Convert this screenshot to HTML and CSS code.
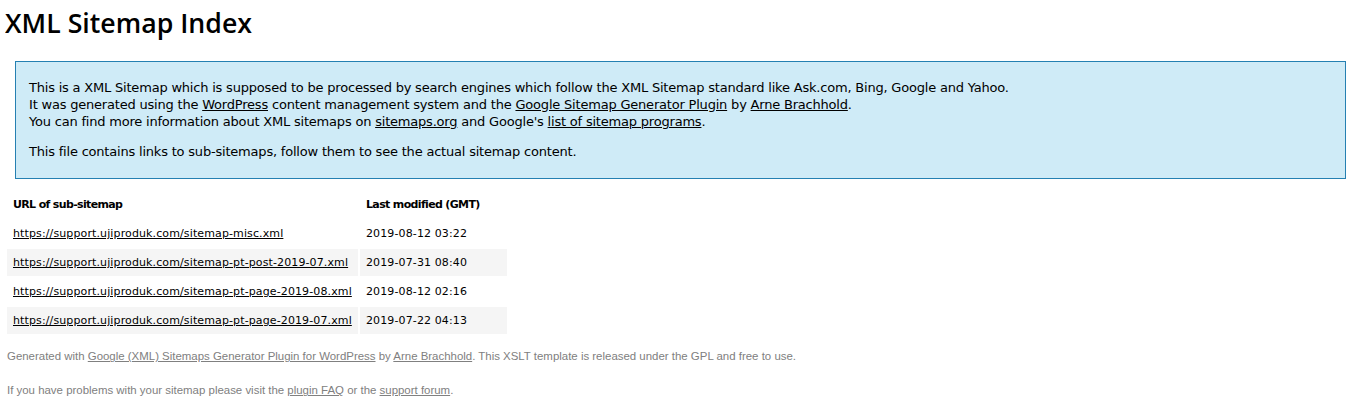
FILE: index.html
```html
<!doctype html>
<html>
<head>
    <meta charset="utf-8">
    <title>XML Sitemap</title>
    <link rel="stylesheet" href="styles.css">
</head>
<body>
    <h1>XML Sitemap Index</h1>
    <div id="intro">
        <p>
            This is a XML Sitemap which is supposed to be processed by search engines which follow the XML Sitemap standard like Ask.com, Bing, Google and Yahoo.<br>
            It was generated using the <a href="#">WordPress</a> content management system and the <strong><a href="#">Google Sitemap Generator Plugin</a></strong> by <a href="#">Arne Brachhold</a>.<br>
            You can find more information about XML sitemaps on <a href="#">sitemaps.org</a> and Google's <a href="#">list of sitemap programs</a>.
        </p>
        <p>This file contains links to sub-sitemaps, follow them to see the actual sitemap content.</p>
    </div>
    <div id="content">
        <table class="sitemaps">
            <tr>
                <th class="colUrl">URL of sub-sitemap</th>
                <th class="colDate">Last modified (GMT)</th>
            </tr>
            <tr>
                <td><a href="#">https://support.ujiproduk.com/sitemap-misc.xml</a></td>
                <td>2019-08-12 03:22</td>
            </tr>
            <tr class="high">
                <td><a href="#">https://support.ujiproduk.com/sitemap-pt-post-2019-07.xml</a></td>
                <td>2019-07-31 08:40</td>
            </tr>
            <tr>
                <td><a href="#">https://support.ujiproduk.com/sitemap-pt-page-2019-08.xml</a></td>
                <td>2019-08-12 02:16</td>
            </tr>
            <tr class="high">
                <td><a href="#">https://support.ujiproduk.com/sitemap-pt-page-2019-07.xml</a></td>
                <td>2019-07-22 04:13</td>
            </tr>
        </table>
    </div>
    <div id="footer">
        <p>Generated with <a href="#">Google (XML) Sitemaps Generator Plugin for WordPress</a> by <a href="#">Arne Brachhold</a>. This XSLT template is released under the GPL and free to use.</p>
        <p>If you have problems with your sitemap please visit the <a href="#">plugin FAQ</a> or the <a href="#">support forum</a>.</p>
    </div>
</body>
</html>
```

FILE: styles.css
```css
body {
    font-family: "DejaVu Sans", Verdana, sans-serif;
    font-size: 13px;
    margin: 5px;
    color: #000;
}

h1 {
    font-family: "Open Sans", "DejaVu Sans", sans-serif;
    font-weight: 600;
    font-size: 26.7px;
    margin: 0;
    padding-bottom: 10px;
    line-height: 36px;
}

#intro {
    background-color: #CFEBF7;
    border: 1px #2580B2 solid;
    padding: 5px 13px;
    margin: 10px 6px 10px 10px;
    letter-spacing: -0.2px;
}

#intro p {
    line-height: 16.8667px;
    margin: 13px 0;
}

#intro strong {
    font-weight: normal;
}

td {
    font-size: 11px;
    line-height: 15px;
    padding: 6px;
    letter-spacing: 0.12px;
    white-space: nowrap;
}

th {
    text-align: left;
    font-size: 11px;
    line-height: 15px;
    padding: 6px;
    letter-spacing: -0.65px;
    white-space: nowrap;
}

th.colUrl {
    width: 339px;
}

th.colDate {
    width: 135px;
}

tr.high {
    background-color: whitesmoke;
}

#footer {
    padding: 2px;
    margin-top: 12px;
    font-family: "Liberation Sans", Arial, sans-serif;
    font-size: 11.45px;
    color: gray;
}

#footer p {
    margin: 0 0 22px 0;
}

#footer a {
    color: gray;
}

a {
    color: black;
}
```
